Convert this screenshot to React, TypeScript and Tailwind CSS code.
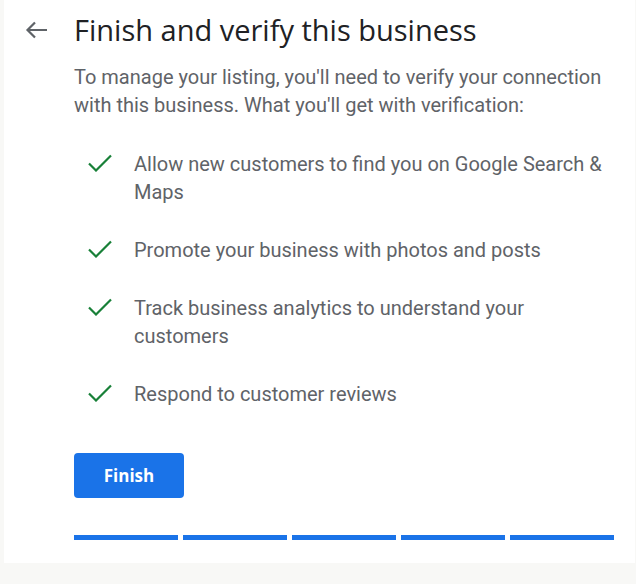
import React from "react";

const items = [
  "Allow new customers to find you on Google Search & Maps",
  "Promote your business with photos and posts",
  "Track business analytics to understand your customers",
  "Respond to customer reviews",
];

function Check() {
  return (
    <svg width="24" height="18" viewBox="0 0 24 18" className="shrink-0">
      <path d="M1 9.5L8 16.5L23 1.5" fill="none" stroke="#188038" strokeWidth="2.2" />
    </svg>
  );
}

export default function App() {
  return (
    <div className="w-[636px] h-[584px] bg-[#f8f8f6] pl-1 pr-px pb-[21px]">
      <div className="h-full bg-white flex" style={{ fontFamily: "Roboto, 'Liberation Sans', sans-serif" }}>
        <div className="w-[70px] shrink-0 pl-[20px] pt-[18px]">
          <svg width="24" height="24" viewBox="0 0 24 24">
            <path d="M23 12H3M11 4.5L3.5 12L11 19.5" fill="none" stroke="#5f6368" strokeWidth="2.2" />
          </svg>
        </div>
        <div className="flex-1 pr-[21px] pt-[11px]">
          <h1 className="text-[29px] leading-[38px] text-[#202124]" style={{ fontFamily: "'Open Sans', Roboto, sans-serif" }}>
            Finish and verify this business
          </h1>
          <p className="mt-[14px] text-[20px] leading-[28px] text-[#5f6368]">
            To manage your listing, you'll need to verify your connection with this business. What you'll get with verification:
          </p>
          <ul className="mt-[31px] flex flex-col gap-[30px]">
            {items.map((t) => (
              <li key={t} className="flex">
                <div className="w-[60px] shrink-0 pl-[14px] pt-[4px]">
                  <Check />
                </div>
                <span className="flex-1 text-[20px] leading-[28px] text-[#5f6368]">{t}</span>
              </li>
            ))}
          </ul>
          <button className="mt-[45px] w-[110px] h-[45px] rounded-[4px] bg-[#1a73e8] text-white text-[17px] font-bold" style={{ fontFamily: "'Open Sans', sans-serif" }}>
            Finish
          </button>
          <div className="mt-[37px] flex gap-[5px]">
            <div className="w-[104px] h-[5px] bg-[#1a73e8]" />
            <div className="w-[104px] h-[5px] bg-[#1a73e8]" />
            <div className="w-[104px] h-[5px] bg-[#1a73e8]" />
            <div className="w-[104px] h-[5px] bg-[#1a73e8]" />
            <div className="w-[104px] h-[5px] bg-[#1a73e8]" />
          </div>
        </div>
      </div>
    </div>
  );
}
